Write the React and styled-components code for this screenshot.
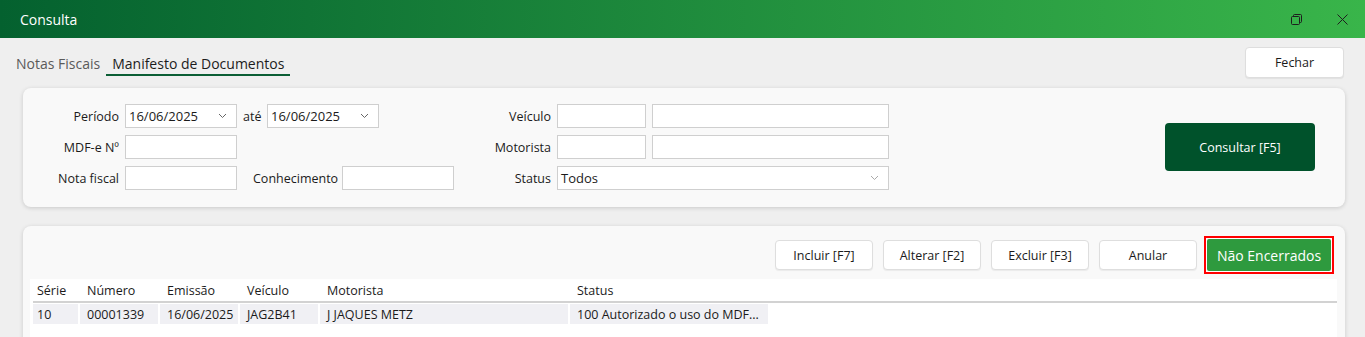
import styled, { createGlobalStyle } from "styled-components";

const GlobalStyle = createGlobalStyle`
  html, body {
    margin: 0;
    padding: 0;
    background: #efefef;
    overflow: hidden;
  }
  body {
    font-family: "Open Sans", "Noto Sans", sans-serif;
    font-size: 12.5px;
    color: #1b1b1b;
  }
`;

const columns = [
  { key: "serie", title: "Série", width: 47, pad: 4 },
  { key: "numero", title: "Número", width: 80, pad: 7 },
  { key: "emissao", title: "Emissão", width: 80, pad: 7 },
  { key: "veiculo", title: "Veículo", width: 80, pad: 7 },
  { key: "motorista", title: "Motorista", width: 250, pad: 7 },
  { key: "status", title: "Status", width: 200, pad: 7 },
];

const rows = [
  {
    serie: "10",
    numero: "00001339",
    emissao: "16/06/2025",
    veiculo: "JAG2B41",
    motorista: "J JAQUES METZ",
    status: "100 Autorizado o uso do MDF...",
  },
];

const gridCols = columns.map((c) => `${c.width}px`).join(" ");

function Chevron({ color = "#666" }) {
  return (
    <svg width="9" height="6" viewBox="0 0 9 6">
      <path d="M1 1l3.5 3.5L8 1" fill="none" stroke={color} strokeWidth="1" />
    </svg>
  );
}

function App() {
  return (
    <>
      <GlobalStyle />
      <TitleBar>
        <Title>Consulta</Title>
        <WindowControls>
          <WinButton>
            <svg width="11" height="11" viewBox="0 0 11 11">
              <rect x="0.5" y="2.5" width="8" height="8" rx="1" fill="none" stroke="#1e1e1e" />
              <path d="M2.5 2.5V1.5a1 1 0 0 1 1-1h6a1 1 0 0 1 1 1v6a1 1 0 0 1-1 1H8.5" fill="none" stroke="#1e1e1e" />
            </svg>
          </WinButton>
          <WinButton>
            <svg width="11" height="11" viewBox="0 0 11 11">
              <path d="M0.5 0.5l10 10M10.5 0.5l-10 10" stroke="#1e1e1e" strokeWidth="1" />
            </svg>
          </WinButton>
        </WindowControls>
      </TitleBar>

      <TopRow>
        <TabList>
          <Tab>Notas Fiscais</Tab>
          <Tab $active>Manifesto de Documentos</Tab>
        </TabList>
        <LightButton $width={99} $height={31}>
          Fechar
        </LightButton>
      </TopRow>

      <FilterPanel>
        <LeftBlock>
          <FormRow>
            <Label $width={96}>Período</Label>
            <Select $width={112}>
              <span>16/06/2025</span>
              <Chevron />
            </Select>
            <InlineLabel $width={30} $pad={6}>até</InlineLabel>
            <Select $width={112}>
              <span>16/06/2025</span>
              <Chevron />
            </Select>
          </FormRow>
          <FormRow>
            <Label $width={96}>MDF-e Nº</Label>
            <Input $width={112} />
          </FormRow>
          <FormRow>
            <Label $width={96}>Nota fiscal</Label>
            <Input $width={112} />
            <InlineLabel $width={105} $pad={16}>Conhecimento</InlineLabel>
            <Input $width={112} />
          </FormRow>
        </LeftBlock>

        <RightBlock>
          <FormRow>
            <Label $width={70}>Veículo</Label>
            <Input $width={89} />
            <Input $width={237} $gap={6} />
          </FormRow>
          <FormRow>
            <Label $width={70}>Motorista</Label>
            <Input $width={89} />
            <Input $width={237} $gap={6} />
          </FormRow>
          <FormRow>
            <Label $width={70}>Status</Label>
            <Select $width={332}>
              <span>Todos</span>
              <Chevron color="#aaa" />
            </Select>
          </FormRow>
        </RightBlock>

        <ConsultButton>Consultar [F5]</ConsultButton>
      </FilterPanel>

      <ResultPanel>
        <Toolbar>
          <LightButton $width={98} $height={30}>Incluir [F7]</LightButton>
          <LightButton $width={98} $height={30}>Alterar [F2]</LightButton>
          <LightButton $width={98} $height={30}>Excluir [F3]</LightButton>
          <LightButton $width={98} $height={30}>Anular</LightButton>
          <HighlightFrame>
            <GreenButton>Não Encerrados</GreenButton>
          </HighlightFrame>
        </Toolbar>

        <TableArea>
          <HeaderRow>
            {columns.map((c) => (
              <HeaderCell key={c.key} $pad={c.pad}>{c.title}</HeaderCell>
            ))}
          </HeaderRow>
          {rows.map((r, i) => (
            <DataRow key={i}>
              {columns.map((c) => (
                <DataCell key={c.key} $pad={c.pad}>{r[c.key]}</DataCell>
              ))}
            </DataRow>
          ))}
        </TableArea>
      </ResultPanel>
    </>
  );
}

const TitleBar = styled.div`
  height: 38px;
  display: flex;
  align-items: center;
  padding-left: 20px;
  background: linear-gradient(90deg, #04612f 0%, #39b54a 100%);
  color: #ffffff;
`;

const Title = styled.div`
  font-size: 14px;
`;

const WindowControls = styled.div`
  margin-left: auto;
  display: flex;
  height: 100%;
`;

const WinButton = styled.div`
  width: 46px;
  height: 100%;
  display: flex;
  align-items: center;
  justify-content: center;
`;

const TopRow = styled.div`
  display: flex;
  align-items: center;
  justify-content: space-between;
  height: 31px;
  padding: 9px 21px 0 10px;
`;

const TabList = styled.div`
  display: flex;
  align-items: center;
`;

const Tab = styled.div`
  font-size: 14px;
  padding: 2px 6px 1px;
  color: ${(p) => (p.$active ? "#1c1c1c" : "#5a5a5a")};
  border-bottom: 2px solid ${(p) => (p.$active ? "#0b5e35" : "transparent")};
  margin-top: 2px;
`;

const LightButton = styled.div`
  width: ${(p) => p.$width}px;
  height: ${(p) => p.$height}px;
  box-sizing: border-box;
  display: flex;
  align-items: center;
  justify-content: center;
  background: #ffffff;
  border: 1px solid #dedede;
  border-radius: 4px;
  box-shadow: 0 1px 1px rgba(0, 0, 0, 0.06);
  color: #1b1b1b;
`;

const HighlightFrame = styled.div`
  border: 2px solid #ff0000;
  padding: 1px;
  background: #ffffff;
  margin: -3px -3px -3px -3px;
`;

const GreenButton = styled.div`
  width: 124px;
  height: 32px;
  box-sizing: border-box;
  display: flex;
  align-items: center;
  justify-content: center;
  background: #2e9a3e;
  color: #ffffff;
  border-radius: 2px;
  font-size: 14px;
`;

const Panel = styled.div`
  background: #f9f9f9;
  border-radius: 8px;
  box-shadow: 0 1px 4px rgba(0, 0, 0, 0.16);
  margin-left: 23px;
  margin-right: 20px;
`;

const FilterPanel = styled(Panel)`
  margin-top: 10px;
  padding: 16px 0 17px;
  display: flex;
  align-items: center;
`;

const LeftBlock = styled.div`
  width: 458px;
  display: flex;
  flex-direction: column;
  gap: 7px;
`;

const RightBlock = styled.div`
  display: flex;
  flex-direction: column;
  gap: 7px;
`;

const FormRow = styled.div`
  display: flex;
  align-items: center;
  height: 24px;
`;

const Label = styled.div`
  width: ${(p) => p.$width}px;
  margin-right: 6px;
  text-align: right;
  white-space: nowrap;
`;

const InlineLabel = styled.div`
  width: ${(p) => p.$width}px;
  padding-left: ${(p) => p.$pad}px;
  box-sizing: border-box;
  white-space: nowrap;
`;

const Input = styled.div`
  width: ${(p) => p.$width}px;
  height: 24px;
  box-sizing: border-box;
  margin-left: ${(p) => p.$gap || 0}px;
  background: #ffffff;
  border: 1px solid #cfcfcf;
`;

const Select = styled(Input)`
  display: flex;
  align-items: center;
  justify-content: space-between;
  padding: 0 9px 0 3px;
  font-size: 13px;
`;

const ConsultButton = styled.div`
  margin-left: auto;
  margin-right: 30px;
  width: 150px;
  height: 48px;
  display: flex;
  align-items: center;
  justify-content: center;
  background: #00522b;
  color: #ffffff;
  border-radius: 4px;
`;

const ResultPanel = styled(Panel)`
  margin-top: 19px;
  padding: 14px 8px 0 7px;
`;

const Toolbar = styled.div`
  display: flex;
  justify-content: flex-end;
  align-items: center;
  gap: 10px;
  padding-right: 6px;
  height: 30px;
`;

const TableArea = styled.div`
  margin-top: 9px;
  background: #ffffff;
  padding-left: 3px;
  height: 120px;
`;

const HeaderRow = styled.div`
  display: grid;
  grid-template-columns: ${gridCols};
  height: 22px;
  align-items: center;
  border-bottom: 2px solid #d2d2d2;
`;

const HeaderCell = styled.div`
  padding-left: ${(p) => p.$pad}px;
`;

const DataRow = styled.div`
  display: grid;
  grid-template-columns: ${gridCols};
  height: 20px;
  margin-top: 1px;
`;

const DataCell = styled.div`
  margin-right: 2px;
  padding-left: ${(p) => p.$pad}px;
  background: #f0f0f4;
  display: flex;
  align-items: center;
  white-space: nowrap;
  overflow: hidden;
`;

export default App;
